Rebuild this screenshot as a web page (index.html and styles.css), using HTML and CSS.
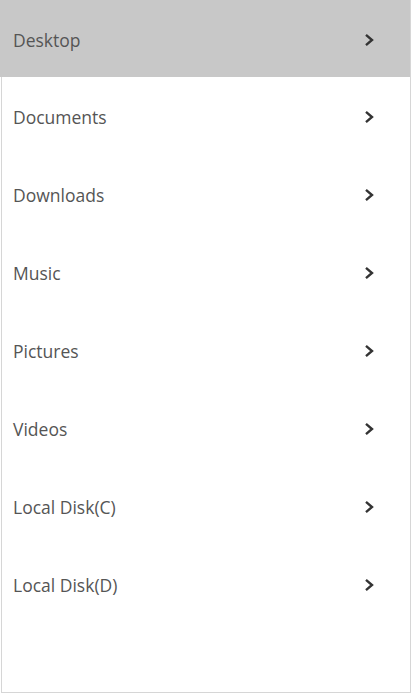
FILE: index.html
```html
<!DOCTYPE html>
<html lang="en">
<head>
<meta charset="utf-8">
<title>Folders</title>
<link rel="stylesheet" href="styles.css">
</head>
<body>
<nav class="panel">
  <ul class="list">
    <li class="item active"><span class="label">Desktop</span><svg class="chev" viewBox="0 0 10 14"><path d="M2 1.8 L8 7 L2 12.2"/></svg></li>
    <li class="item"><span class="label">Documents</span><svg class="chev" viewBox="0 0 10 14"><path d="M2 1.8 L8 7 L2 12.2"/></svg></li>
    <li class="item"><span class="label">Downloads</span><svg class="chev" viewBox="0 0 10 14"><path d="M2 1.8 L8 7 L2 12.2"/></svg></li>
    <li class="item"><span class="label">Music</span><svg class="chev" viewBox="0 0 10 14"><path d="M2 1.8 L8 7 L2 12.2"/></svg></li>
    <li class="item"><span class="label">Pictures</span><svg class="chev" viewBox="0 0 10 14"><path d="M2 1.8 L8 7 L2 12.2"/></svg></li>
    <li class="item"><span class="label">Videos</span><svg class="chev" viewBox="0 0 10 14"><path d="M2 1.8 L8 7 L2 12.2"/></svg></li>
    <li class="item"><span class="label">Local Disk(C)</span><svg class="chev" viewBox="0 0 10 14"><path d="M2 1.8 L8 7 L2 12.2"/></svg></li>
    <li class="item"><span class="label">Local Disk(D)</span><svg class="chev" viewBox="0 0 10 14"><path d="M2 1.8 L8 7 L2 12.2"/></svg></li>
  </ul>
</nav>
</body>
</html>
```
FILE: styles.css
```css
html, body {
  margin: 0;
  padding: 0;
  background: #ffffff;
}
.panel {
  box-sizing: border-box;
  margin-left: 1px;
  width: 410px;
  height: 693px;
  border: 1px solid #d6d6d6;
  border-top: none;
  background: #ffffff;
}
.list {
  list-style: none;
  margin: 0;
  padding: 0;
}
.item {
  box-sizing: border-box;
  height: 78px;
  display: flex;
  align-items: center;
  justify-content: space-between;
  padding: 2px 36px 0 11px;
  font-family: "Open Sans", "Noto Sans", sans-serif;
  font-size: 17.5px;
  color: #555555;
}
.item.active {
  height: 77px;
  margin-left: -2px;
  padding-left: 13px;
  width: 410px;
  background: #c8c8c8;
}
.label {
  line-height: 22px;
}
.chev {
  width: 10px;
  height: 14px;
  fill: none;
  stroke: #333333;
  stroke-width: 2.4;
}
```
